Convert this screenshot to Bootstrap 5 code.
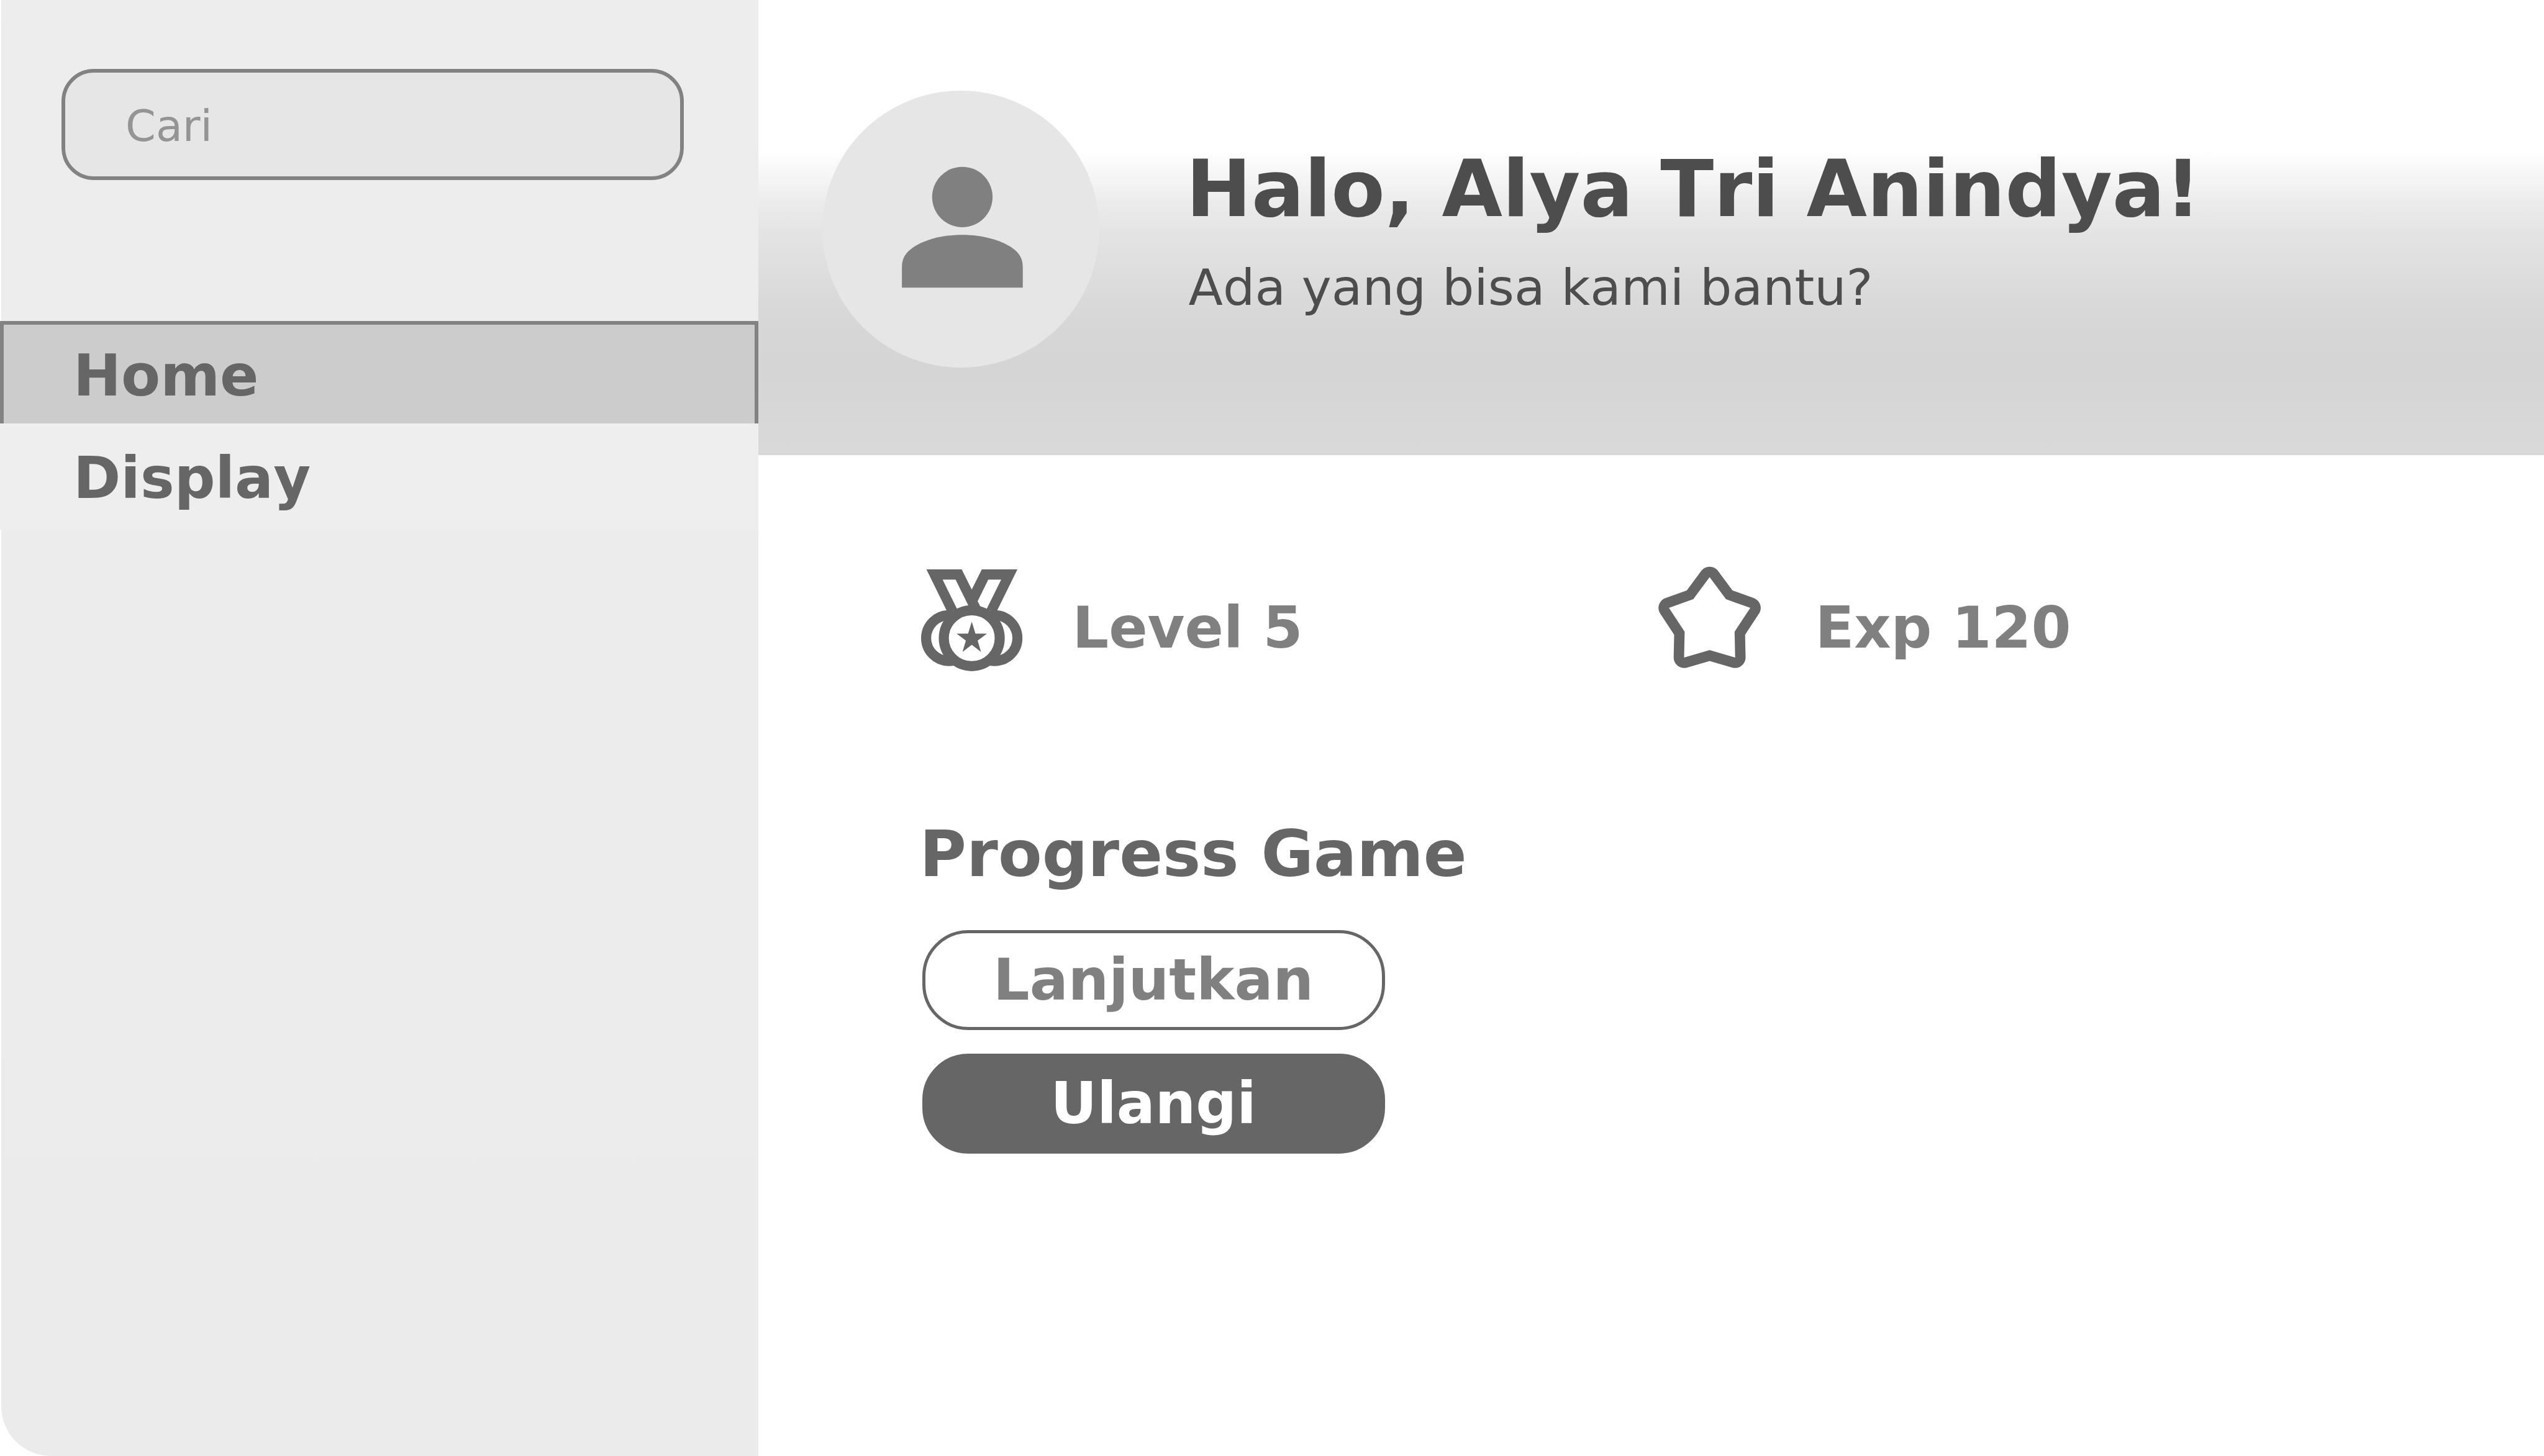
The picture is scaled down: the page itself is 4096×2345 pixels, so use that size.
<!DOCTYPE html>
<html lang="id">
<head>
<meta charset="utf-8">
<meta name="viewport" content="width=device-width, initial-scale=1">
<title>Home</title>
<link href="https://cdn.jsdelivr.net/npm/bootstrap@5.3.0/dist/css/bootstrap.min.css" rel="stylesheet">
<style>
  body { font-family: "DejaVu Sans", Verdana, sans-serif; font-kerning: none; background: #fff; color: #666; }

  .side-panel {
    flex: 0 0 29.8%;
    border-left: 2px solid transparent;
    border-bottom-left-radius: 82px 80px;
    background: linear-gradient(#ededed, #ececec 58%, #ebebeb) padding-box;
  }
  .side-search { padding: 111px 120px 0 97px; margin-bottom: 227px; }
  .search-input, .search-input:focus {
    height: 179px;
    padding: 4px 97px 0;
    border: 6px solid #828282;
    border-radius: 52px;
    background: #e6e6e6;
    font-size: 70px;
    line-height: 100px;
    color: #666;
  }
  .search-input::placeholder { color: #949494; }

  .side-menu { margin-left: -2px; }
  .side-menu .nav-link {
    height: 171px;
    padding: 6px 118px 0;
    font-size: 92px;
    line-height: 140px;
    color: #666;
    background: #eee;
  }
  .side-menu .nav-link.active {
    height: 165px;
    padding-left: 112px;
    border: solid #828282;
    border-width: 6px 6px 0;
    background: #ccc;
  }

  .greeting {
    gap: 140px;
    padding: 146px 103px 141px;
    color: #4d4d4d;
    background: linear-gradient(#fff 33%, #f5f5f5 39%, #ebebeb 45%, #e4e4e4 51%, #dfdfdf 58%, #dadada 65%, #d6d6d6 73%, #d5d5d5 82%, #d9d9d9 100%);
  }
  .avatar { width: 446px; height: 446px; background: #e6e6e6; color: #808080; }
  .greeting-text { gap: 32px; }
  .greeting-title { font-size: 126px; line-height: 156px; }
  .greeting-sub { font-size: 81px; line-height: 96px; }

  .content-area { padding: 179px 0 120px 260px; }
  .stat-grid { display: grid; grid-template-columns: 5fr 6fr; margin-bottom: 229px; }
  .stat-item { gap: 80px; }
  .stat-value { font-size: 92px; line-height: 138px; color: #808080; }
  .section-title { font-size: 103px; line-height: 130px; margin-bottom: 58px; }
  .action-list { gap: 38px; }
  .btn-action {
    width: 745px;
    height: 161px;
    padding: 0;
    border: 5px solid #666;
    border-radius: 74px;
    font-size: 92px;
    font-weight: 700;
    line-height: 140px;
  }
  .btn-continue, .btn-continue:hover { color: #808080; background: #fff; border-color: #666; }
  .btn-restart, .btn-restart:hover { color: #fff; background: #666; border-color: #666; }
</style>
<script src="https://cdn.jsdelivr.net/npm/bootstrap@5.3.0/dist/js/bootstrap.bundle.min.js"></script>
</head>
<body>
<div class="d-flex min-vh-100">
  <aside class="side-panel">
    <form class="side-search" role="search">
      <input class="form-control search-input" id="cari" type="search" placeholder="Cari" aria-label="Cari">
    </form>
    <nav class="nav flex-column side-menu">
      <a class="nav-link active fw-bold d-flex align-items-center" href="#" aria-current="page">Home</a>
      <a class="nav-link fw-bold d-flex align-items-center" href="#">Display</a>
    </nav>
  </aside>

  <main class="flex-grow-1">
    <header class="greeting d-flex align-items-center">
      <div class="avatar rounded-circle d-flex align-items-center justify-content-center flex-shrink-0">
        <svg width="292" height="292" viewBox="-0.2 0.25 24 24" fill="currentColor" aria-hidden="true">
          <circle cx="12" cy="8" r="4"/>
          <path d="M12 13C9.3 13 7 13.7 5.6 14.6C4.4 15.4 4 16.2 4 17.3V20H20V17.3C20 16.2 19.6 15.4 18.4 14.6C17 13.7 14.7 13 12 13Z"/>
        </svg>
      </div>
      <div class="greeting-text d-flex flex-column">
        <h1 class="greeting-title fw-bold m-0">Halo, Alya Tri Anindya!</h1>
        <p class="greeting-sub m-0 ps-1">Ada yang bisa kami bantu?</p>
      </div>
    </header>

    <div class="content-area">
      <div class="stat-grid">
        <div class="stat-item d-flex align-items-end">
          <svg width="166" height="164" viewBox="-2 0 166 164" aria-hidden="true">
            <path fill="#666" d="M8.6 0H65.4L81.6 32.4L97.8 0H155.1L122.6 66H41Z"/>
            <path fill="#fff" d="M34.7 16.6H55.5L80 66L59.5 67ZM108.2 16.6H129L104 67H99L91.1 51.3Z"/>
            <g fill="#fff" stroke="#666" stroke-width="16.2">
              <circle cx="45" cy="110.7" r="36.9"/>
              <circle cx="118.2" cy="110.7" r="36.9"/>
              <circle cx="81.6" cy="110.8" r="45"/>
            </g>
            <path fill="#666" d="M81.6 84.3L87.5 103.4H106L91.1 114.8L96.5 133.1L81.6 121.4L66.7 133.1L72.1 114.8L57.2 103.4H75.7Z"/>
          </svg>
          <span class="stat-value fw-bold">Level 5</span>
        </div>
        <div class="stat-item d-flex align-items-end">
          <svg width="173" height="169" viewBox="-2 0 173 169" aria-hidden="true">
            <path fill="#fff" stroke="#666" stroke-width="33.6" stroke-linejoin="round" paint-order="stroke" d="M81.6 17.5L107.9 53L147.1 67.1L121.8 105.4L122.7 147L81.6 135L40.5 147L41.4 105.4L16.1 67.1L55.3 53Z"/>
          </svg>
          <span class="stat-value fw-bold">Exp 120</span>
        </div>
      </div>

      <section>
        <h2 class="section-title fw-bold mt-0">Progress Game</h2>
        <div class="action-list d-flex flex-column align-items-start ps-1">
          <button class="btn btn-action btn-continue" type="button">Lanjutkan</button>
          <button class="btn btn-action btn-restart" type="button">Ulangi</button>
        </div>
      </section>
    </div>
  </main>
</div>
</body>
</html>
